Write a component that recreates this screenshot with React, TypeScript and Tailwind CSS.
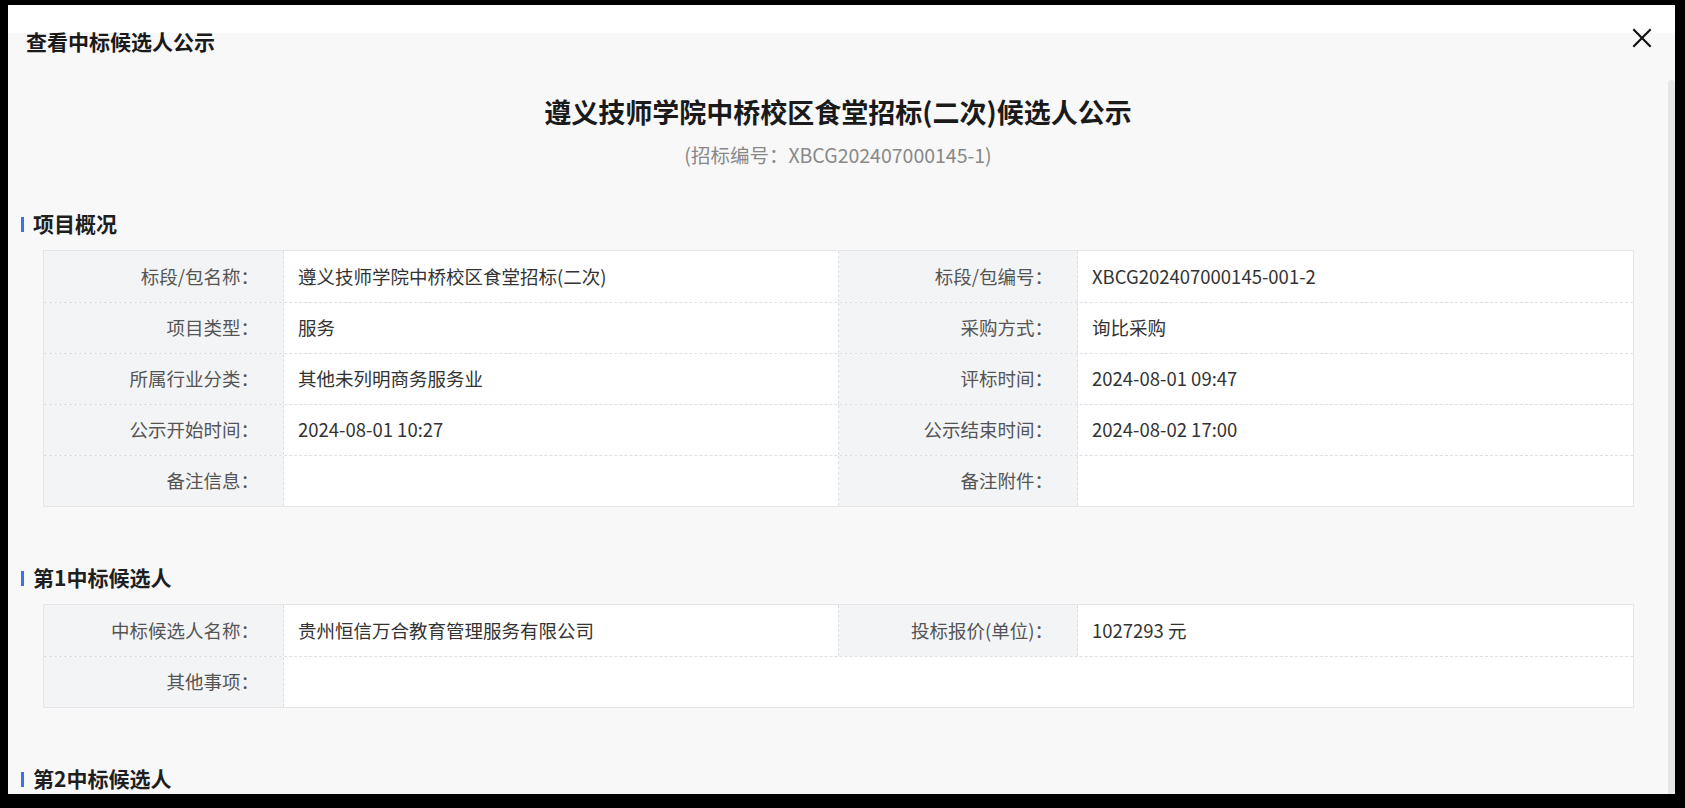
import React from "react";

const font = { fontFamily: '"Noto Sans CJK SC", "Noto Sans", sans-serif' };

type Cell = { label: string; value?: string; span?: boolean };

function InfoTable({ rows }: { rows: Cell[][] }) {
  return (
    <div className="ml-[35px] w-[1591px] border border-[#e3e5e8] bg-white">
      {rows.map((row, i) => (
        <div
          key={i}
          className={`grid h-[51px] grid-cols-[240px_555px_239px_557px] ${i > 0 ? "border-t border-dashed border-[#dcdfe3]" : ""}`}
        >
          {row.map((c, j) => (
            <React.Fragment key={j}>
              <div className="flex items-center justify-end border-r border-dashed border-[#dcdfe3] bg-[#f3f4f6] pr-[24px] text-[18.5px] text-[#555]">
                {c.label}：
              </div>
              <div
                className={`flex items-center pl-[14px] text-[18.5px] text-[#333] ${c.span ? "col-span-3" : j < row.length - 1 ? "border-r border-dashed border-[#dcdfe3]" : ""}`}
              >
                {c.value}
              </div>
            </React.Fragment>
          ))}
        </div>
      ))}
    </div>
  );
}

function Heading({ text, mt }: { text: string; mt: string }) {
  return (
    <div className={`${mt} flex h-[28px] items-center pl-[13px]`}>
      <span className="mr-[9px] h-[15px] w-[3px] bg-[#3d6ff5]" />
      <span className="text-[21px] font-bold text-[#1f1f1f]">{text}</span>
    </div>
  );
}

export default function App() {
  return (
    <div className="h-[808px] w-[1685px] overflow-hidden bg-black pl-[8px] pt-[5px]" style={font}>
      <div className="relative h-[789px] w-[1667px] overflow-hidden bg-[#f8f8f9]">
        <div className="h-[28px] bg-white" />
        <div className="flex h-[18px] items-center justify-between pl-[18px] pr-[20px]">
          <span className="text-[21px] font-bold text-[#1a1a1a]">查看中标候选人公示</span>
          <svg width="26" height="26" viewBox="0 0 24 24" className="-mt-[8px]" fill="none" stroke="#111" strokeWidth="2">
            <path d="M4 4l16 16M20 4L4 20" />
          </svg>
        </div>
        <div className="absolute right-0 top-[75px] h-[720px] w-[7px] rounded-sm bg-[#e6e6e6]" />
        <div className="w-[1660px]">
          <div className="mt-[44px] h-[34px] text-center text-[27px] leading-[34px] font-bold text-[#1a1a1a]">
            遵义技师学院中桥校区食堂招标(二次)候选人公示
          </div>
          <div className="mt-[13px] h-[26px] text-center text-[19.5px] leading-[26px] text-[#888]">
            (招标编号：XBCG202407000145-1)
          </div>
          <Heading text="项目概况" mt="mt-[42px]" />
          <div className="mt-[12px]">
            <InfoTable
              rows={[
                [
                  { label: "标段/包名称", value: "遵义技师学院中桥校区食堂招标(二次)" },
                  { label: "标段/包编号", value: "XBCG202407000145-001-2" },
                ],
                [
                  { label: "项目类型", value: "服务" },
                  { label: "采购方式", value: "询比采购" },
                ],
                [
                  { label: "所属行业分类", value: "其他未列明商务服务业" },
                  { label: "评标时间", value: "2024-08-01 09:47" },
                ],
                [
                  { label: "公示开始时间", value: "2024-08-01 10:27" },
                  { label: "公示结束时间", value: "2024-08-02 17:00" },
                ],
                [
                  { label: "备注信息", value: "" },
                  { label: "备注附件", value: "" },
                ],
              ]}
            />
          </div>
          <Heading text="第1中标候选人" mt="mt-[57px]" />
          <div className="mt-[12px]">
            <InfoTable
              rows={[
                [
                  { label: "中标候选人名称", value: "贵州恒信万合教育管理服务有限公司" },
                  { label: "投标报价(单位)", value: "1027293 元" },
                ],
                [{ label: "其他事项", value: "", span: true }],
              ]}
            />
          </div>
          <Heading text="第2中标候选人" mt="mt-[57px]" />
        </div>
      </div>
    </div>
  );
}
